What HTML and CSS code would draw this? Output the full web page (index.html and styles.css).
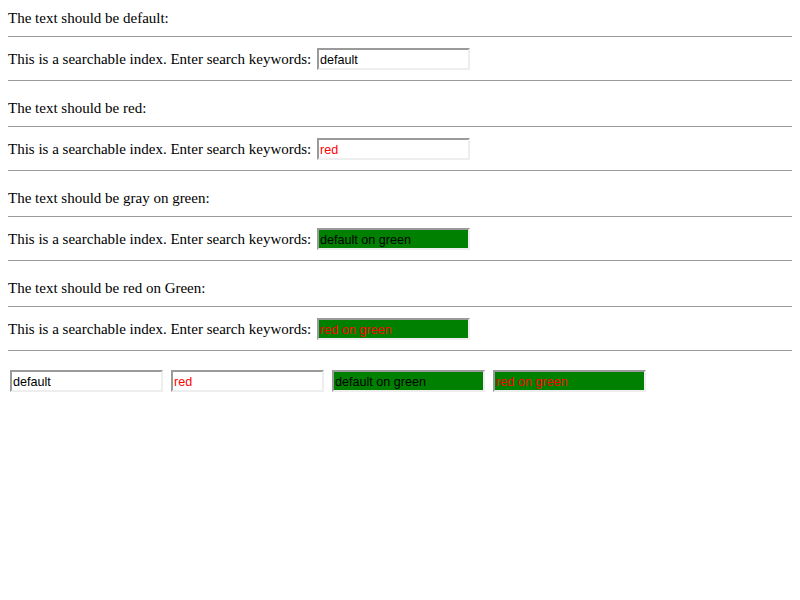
FILE: index.html
```html
<!DOCTYPE html>
<html>
<head>
<meta charset="utf-8">
<title>isindex colors</title>
<link rel="stylesheet" href="styles.css">
</head>
<body>
<div class="note first">The text should be default:</div>
<hr class="rule">
<div class="search">This is a searchable index. Enter search keywords: <input class="field" type="text" value="default"></div>
<hr class="rule">
<div class="note">The text should be red:</div>
<hr class="rule">
<div class="search">This is a searchable index. Enter search keywords: <input class="field red" type="text" value="red"></div>
<hr class="rule">
<div class="note">The text should be gray on green:</div>
<hr class="rule">
<div class="search">This is a searchable index. Enter search keywords: <input class="field green" type="text" value="default on green"></div>
<hr class="rule">
<div class="note">The text should be red on Green:</div>
<hr class="rule">
<div class="search">This is a searchable index. Enter search keywords: <input class="field red green" type="text" value="red on green"></div>
<hr class="rule">
<div class="row">
<input class="field" type="text" value="default">
<input class="field red" type="text" value="red">
<input class="field green" type="text" value="default on green">
<input class="field red green" type="text" value="red on green">
</div>
</body>
</html>
```
FILE: styles.css
```css
html, body {
  background: #ffffff;
}
body {
  margin: 0;
  padding: 8px;
  font-family: "Liberation Serif", "Times New Roman", serif;
  font-size: 15px;
  color: #000000;
}
.note {
  margin: 16px 0 8px;
  line-height: 20px;
  height: 20px;
}
.note.first {
  margin-top: 0;
}
.rule {
  margin: 0;
  height: 0;
  border: 0;
  border-top: 1px solid #9a9a9a;
  border-bottom: 1px solid #ffffff;
}
.search {
  margin: 8px 0;
  height: 26px;
  line-height: 26px;
  display: flex;
  align-items: center;
  white-space: pre;
}
.field {
  box-sizing: border-box;
  width: 153px;
  height: 22px;
  margin: 0 0 0 2px;
  padding: 2px 1px 0;
  border-style: solid;
  border-width: 2px;
  border-color: #9a9a9a #eeeeee #eeeeee #9a9a9a;
  background: #ffffff;
  color: #000000;
  font-family: "Liberation Sans", Arial, sans-serif;
  font-size: 12.6px;
  outline: none;
}
.field.red {
  color: #ff0000;
}
.field.green {
  background: #008000;
}
.row {
  margin-top: 18px;
  display: flex;
  gap: 8px;
}
.row .field {
  margin-left: 0;
}
.row .field:first-child {
  margin-left: 2px;
}
```
